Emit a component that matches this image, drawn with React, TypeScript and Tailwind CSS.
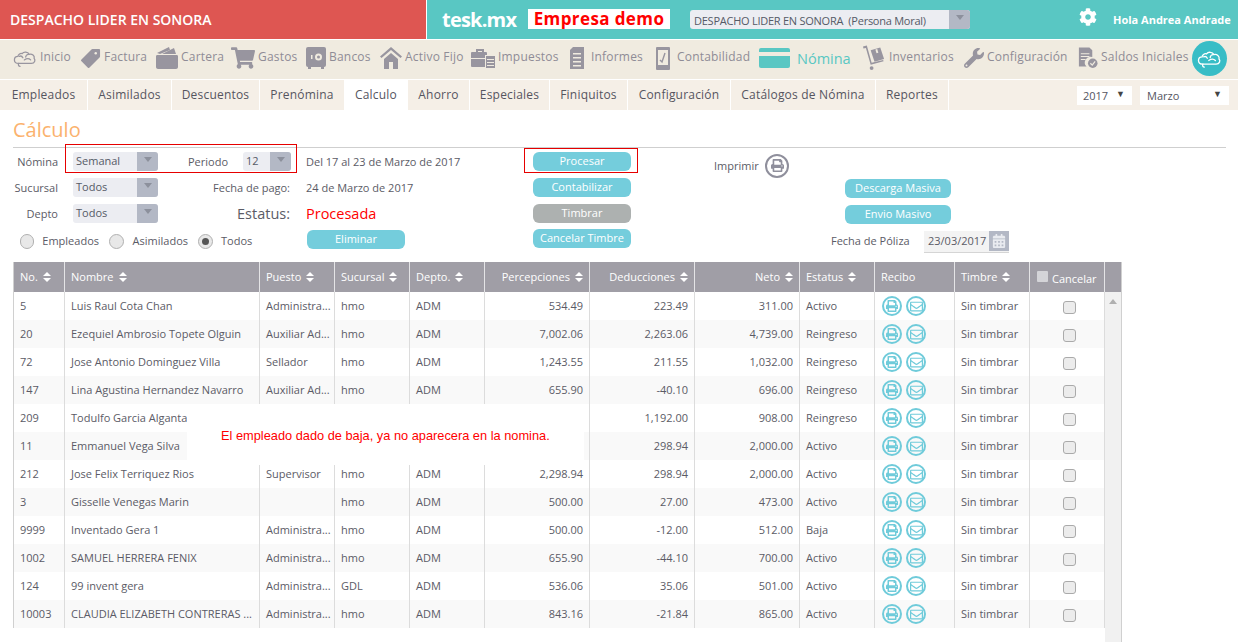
import React from 'react';
import { FaCog, FaPrint, FaShoppingCart, FaWrench, FaRegEnvelope, FaCalendarAlt } from 'react-icons/fa';

const font = "font-['Open_Sans','Noto_Sans',sans-serif]";

function CloudIcon({ className = '' }: { className?: string }) {
  return (
    <svg viewBox="0 0 34 26" className={className} fill="none" stroke="currentColor" strokeWidth="1.8" strokeLinecap="round">
      <path d="M8 20c-4 0-6-2-6-5s2-5 5-5c0-2 3-5 6-4 2-3 8-3 10 1 4-1 8 2 7 6 2 2 1 7-4 7H8z" />
      <path d="M9 10c2-1 4 0 5 2M22 7c-2 0-4 2-4 4M16 15c3-2 7-2 9 0" />
      <path d="M8 20c-1 2 0 4 2 4" />
    </svg>
  );
}

function TagIcon({ className = '' }: { className?: string }) {
  return (
    <svg viewBox="0 0 22 22" className={className} fill="currentColor" stroke="currentColor" strokeWidth="2" strokeLinejoin="round">
      <path d="M13 2h7v7L9 20l-7-7z" />
      <circle cx="16.500" cy="5.500" r="1.300" fill="#f0ebe0" stroke="none" />
    </svg>
  );
}

function WalletIcon({ className = '' }: { className?: string }) {
  return (
    <svg viewBox="0 0 22 22" className={className} fill="currentColor">
      <path d="M1 6 13 0l1 3L4 7z" />
      <path d="M6 7 18 1l2 6z" />
      <path d="M0 9c0-1 1-1 2-1h18c1 0 2 0 2 1v11c0 1-1 2-2 2H2c-1 0-2-1-2-2z" />
    </svg>
  );
}

function SafeIcon({ className = '' }: { className?: string }) {
  return (
    <svg viewBox="0 0 20 22" className={className}>
      <rect x="0" y="0" width="20" height="20" rx="2" fill="currentColor" />
      <rect x="2" y="20" width="3" height="2" fill="currentColor" />
      <rect x="15" y="20" width="3" height="2" fill="currentColor" />
      <circle cx="12.500" cy="10" r="3.500" fill="#f0ebe0" />
      <circle cx="12.500" cy="10" r="1.500" fill="currentColor" />
      <rect x="5" y="8" width="1.500" height="4" fill="#f0ebe0" />
    </svg>
  );
}

function HouseIcon({ className = '' }: { className?: string }) {
  return (
    <svg viewBox="0 0 22 22" className={className} fill="currentColor">
      <path d="M0 9.500 11 0l11 9.500-1.500 1.500L11 3 1.500 11z" />
      <path d="M4 12l7-6 7 6v10h-5v-7H9v7H4z" />
    </svg>
  );
}

function BriefcaseIcon({ className = '' }: { className?: string }) {
  return (
    <svg viewBox="0 0 24 20" className={className} fill="currentColor">
      <path d="M5 4V1h8v3h-2V3H7v1z" />
      <rect x="0" y="4" width="16" height="15" rx="1" />
      <rect x="14" y="7" width="10" height="13" fill="#f0ebe0" />
      <rect x="15" y="8" width="9" height="12" />
      <path d="M16 11h7v1h-7zM16 14h7v1h-7zM16 17h7v1h-7zM0 10h14v1H0z" fill="#f0ebe0" />
    </svg>
  );
}

function DocIcon({ className = '' }: { className?: string }) {
  return (
    <svg viewBox="0 0 14 22" className={className} fill="currentColor">
      <path d="M3 0h11v22H0V3z" />
      <path d="M3 6h8v1.500H3zM3 10h8v1.500H3zM3 14h8v1.500H3zM3 18h8v1.500H3z" fill="#f0ebe0" />
    </svg>
  );
}

function LedgerIcon({ className = '' }: { className?: string }) {
  return (
    <svg viewBox="0 0 14 23" className={className}>
      <rect width="14" height="23" rx="1" fill="currentColor" />
      <rect x="2" y="3" width="10" height="15" fill="#f0ebe0" />
      <path d="M4 13l2 2 3-9" stroke="currentColor" strokeWidth="1.400" fill="none" />
    </svg>
  );
}

function DollyIcon({ className = '' }: { className?: string }) {
  return (
    <svg viewBox="0 0 24 26" className={className} fill="currentColor">
      <path d="M0 1l4-1 5 18 12-3 .5 1.500L8 20 3 2.500 .5 3z" />
      <circle cx="9" cy="23.500" r="2" />
      <path d="M8 5l10-3 4 12-10 3z" />
      <rect x="13.500" y="4" width="2" height="4" fill="#f0ebe0" transform="rotate(-17 14 6)" />
    </svg>
  );
}

function ChecklistIcon({ className = '' }: { className?: string }) {
  return (
    <svg viewBox="0 0 22 22" className={className} fill="currentColor">
      <path d="M2 0h11l3 3v7a6 6 0 0 0-6 10H2z" />
      <path d="M4 6h9v1H4zM4 9h9v1H4zM4 12h5v1H4z" fill="#f0ebe0" />
      <circle cx="16.500" cy="16.500" r="5" />
      <path d="M14 16.500l2 2 3-4" stroke="#f0ebe0" strokeWidth="1.300" fill="none" />
    </svg>
  );
}

function SortIcon() {
  return (
    <svg viewBox="0 0 8 10" className="ml-[5px] inline-block h-[10px] w-[8px] shrink-0" fill="currentColor">
      <path d="M4 0l4 4H0zM0 6h8l-4 4z" />
    </svg>
  );
}

function Select({ value, width }: { value: string; width: string }) {
  return (
    <div className={`flex h-[19px] ${width} items-stretch overflow-hidden rounded-[3px] bg-[#ecedf2]`}>
      <span className="flex-1 truncate pl-[3px] text-[11px] leading-[17px] text-[#555a66]">{value}</span>
      <span className="flex w-[21px] items-start justify-center bg-[#b3b8c5] pt-[5px]">
        <span className="h-0 w-0 border-x-[4px] border-t-[5px] border-x-transparent border-t-[#8c909c]" />
      </span>
    </div>
  );
}

function Btn({ label, gray = false, width = 'w-[98px]' }: { label: string; gray?: boolean; width?: string }) {
  return (
    <button className={`flex h-[19px] ${width} items-center justify-center rounded-[6px] text-[11px] text-white ${gray ? 'bg-[#adb1b0]' : 'bg-[#74cddc]'}`}>
      {label}
    </button>
  );
}

function Radio({ checked = false }: { checked?: boolean }) {
  return (
    <span className="flex h-[15px] w-[15px] items-center justify-center rounded-full border border-[#b0b0b0] bg-[#e8e8e8]">
      {checked && <span className="h-[7px] w-[7px] rounded-full bg-[#555]" />}
    </span>
  );
}

const menuIcon = 'text-[#98959f]';

const menu: { label: string; icon: React.ReactNode; w: string }[] = [
  { label: 'Inicio', icon: <CloudIcon className={`h-[21px] w-[24px] ${menuIcon}`} />, w: 'w-[67px]' },
  { label: 'Factura', icon: <TagIcon className={`h-[21px] w-[21px] ${menuIcon}`} />, w: 'w-[76px]' },
  { label: 'Cartera', icon: <WalletIcon className={`h-[22px] w-[22px] ${menuIcon}`} />, w: 'w-[75px]' },
  { label: 'Gastos', icon: <FaShoppingCart className={`h-[22px] w-[24px] ${menuIcon}`} />, w: 'w-[75px]' },
  { label: 'Bancos', icon: <SafeIcon className={`h-[22px] w-[20px] ${menuIcon}`} />, w: 'w-[74px]' },
  { label: 'Activo Fijo', icon: <HouseIcon className={`h-[22px] w-[22px] ${menuIcon}`} />, w: 'w-[91px]' },
  { label: 'Impuestos', icon: <BriefcaseIcon className={`h-[20px] w-[24px] ${menuIcon}`} />, w: 'w-[98px]' },
  { label: 'Informes', icon: <DocIcon className={`mr-[3px] h-[22px] w-[16px] ${menuIcon}`} />, w: 'w-[86px]' },
  { label: 'Contabilidad', icon: <LedgerIcon className={`mr-[3px] h-[23px] w-[16px] ${menuIcon}`} />, w: 'w-[104px]' },
];

const menuRight: { label: string; icon: React.ReactNode; w: string }[] = [
  { label: 'Inventarios', icon: <DollyIcon className={`h-[26px] w-[23px] ${menuIcon}`} />, w: 'w-[101px]' },
  { label: 'Configuración', icon: <FaWrench className={`h-[20px] w-[20px] ${menuIcon}`} />, w: 'w-[113px]' },
  { label: 'Saldos Iniciales', icon: <ChecklistIcon className={`h-[22px] w-[21px] ${menuIcon}`} />, w: 'w-[112px]' },
];

const tabs = [
  { label: 'Empleados', w: 'w-[88px]' },
  { label: 'Asimilados', w: 'w-[84px]' },
  { label: 'Descuentos', w: 'w-[88px]' },
  { label: 'Prenómina', w: 'w-[85px]' },
  { label: 'Calculo', w: 'w-[63px]', active: true },
  { label: 'Ahorro', w: 'w-[62px]' },
  { label: 'Especiales', w: 'w-[80px]' },
  { label: 'Finiquitos', w: 'w-[78px]' },
  { label: 'Configuración', w: 'w-[103px]' },
  { label: 'Catálogos de Nómina', w: 'w-[145px]' },
  { label: 'Reportes', w: 'w-[73px]' },
];

const cols = ['w-[51px]', 'w-[195px]', 'w-[75px]', 'w-[75px]', 'w-[75px]', 'w-[105px]', 'w-[105px]', 'w-[105px]', 'w-[75px]', 'w-[80px]', 'w-[75px]', 'w-[75px]', 'w-[16px]'];

type Row = [string, string, string, string, string, string, string, string, string];

const rows: Row[] = [
  ['5', 'Luis Raul Cota Chan', 'Administra...', 'hmo', 'ADM', '534.49', '223.49', '311.00', 'Activo'],
  ['20', 'Ezequiel Ambrosio Topete Olguin', 'Auxiliar Ad...', 'hmo', 'ADM', '7,002.06', '2,263.06', '4,739.00', 'Reingreso'],
  ['72', 'Jose Antonio Dominguez Villa', 'Sellador', 'hmo', 'ADM', '1,243.55', '211.55', '1,032.00', 'Reingreso'],
  ['147', 'Lina Agustina Hernandez Navarro', 'Auxiliar Ad...', 'hmo', 'ADM', '655.90', '-40.10', '696.00', 'Reingreso'],
  ['209', 'Todulfo Garcia Alganta', '', '', '', '', '1,192.00', '908.00', 'Reingreso'],
  ['11', 'Emmanuel Vega Silva', '', '', '', '', '298.94', '2,000.00', 'Activo'],
  ['212', 'Jose Felix Terriquez Rios', 'Supervisor', 'hmo', 'ADM', '2,298.94', '298.94', '2,000.00', 'Activo'],
  ['3', 'Gisselle Venegas Marin', '', 'hmo', 'ADM', '500.00', '27.00', '473.00', 'Activo'],
  ['9999', 'Inventado Gera 1', 'Administra...', 'hmo', 'ADM', '500.00', '-12.00', '512.00', 'Baja'],
  ['1002', 'SAMUEL HERRERA FENIX', 'Administra...', 'hmo', 'ADM', '655.90', '-44.10', '700.00', 'Activo'],
  ['124', '99 invent gera', 'Administra...', 'GDL', 'ADM', '536.06', '35.06', '501.00', 'Activo'],
  ['10003', 'CLAUDIA ELIZABETH CONTRERAS ...', 'Administra...', 'hmo', 'ADM', '843.16', '-21.84', '865.00', 'Activo'],
];

const cell = 'flex h-full shrink-0 items-center border-r border-[#dcdcdc] px-[6px] whitespace-nowrap overflow-hidden';

function HeadCell({ label, w, right = false, sort = true }: { label: string; w: string; right?: boolean; sort?: boolean }) {
  return (
    <div className={`flex h-full ${w} shrink-0 items-center border-r border-[#e4e4e6] px-[6px] ${right ? 'justify-end' : ''}`}>
      <span>{label}</span>
      {sort && <SortIcon />}
    </div>
  );
}

function ReciboIcons() {
  return (
    <div className="flex items-center gap-[4px] pl-px text-[#6fcbda]">
      <span className="flex h-[20px] w-[20px] shrink-0 items-center justify-center rounded-full border-2 border-[#6fcbda]">
        <FaPrint className="h-[12px] w-[12px]" />
      </span>
      <span className="flex h-[20px] w-[20px] shrink-0 items-center justify-center rounded-full border-2 border-[#6fcbda]">
        <FaRegEnvelope className="h-[13px] w-[13px]" />
      </span>
    </div>
  );
}

export default function App() {
  return (
    <div className={`${font} h-[642px] w-[1238px] overflow-hidden bg-white text-[#5b5b66]`}>
      {/* top bar */}
      <div className="flex h-[40px] border-b border-white">
        <div className="flex w-[426px] items-center bg-[#de5652] pl-[10px] text-[14px] text-white [font-weight:600]">
          DESPACHO LIDER EN SONORA
        </div>
        <div className="ml-px flex flex-1 items-center bg-[#59c7c3]">
          <span className="ml-[15px] w-[71px] text-[20px] font-bold leading-none tracking-[-0.8px] whitespace-nowrap text-white">tesk.mx</span>
          <span className="ml-[15px] w-[142px] -translate-y-px bg-white text-center text-[17px] font-bold leading-[20px] tracking-[0.4px] text-[#ff0000]">Empresa demo</span>
          <div className="ml-[20px] flex h-[19px] w-[280px] overflow-hidden rounded-[3px] bg-[#ecedf2]">
            <span className="flex-1 pl-[4px] text-[11px] leading-[21px] tracking-[-0.25px] whitespace-pre text-[#555a66]">DESPACHO LIDER EN SONORA  (Persona Moral)</span>
            <span className="flex w-[21px] items-start justify-center bg-[#b3b8c5] pt-[5px]">
              <span className="h-0 w-0 border-x-[4px] border-t-[5px] border-x-transparent border-t-[#8c909c]" />
            </span>
          </div>
          <FaCog className="ml-[109px] h-[18px] w-[18px] -translate-y-[3px] text-white" />
          <span className="ml-[16px] translate-y-px text-[11px] font-bold whitespace-nowrap text-white">Hola Andrea Andrade</span>
        </div>
      </div>

      {/* main menu */}
      <div className="relative flex h-[40px] items-center border-b border-white bg-[#f0ebe0] pb-[3px] pl-[13px] text-[12px] tracking-[0.2px] text-[#8f8c96]">
        {menu.map((m) => (
          <div key={m.label} className={`flex shrink-0 items-center ${m.w}`}>
            {m.icon}
            <span className="ml-[3px] -translate-y-px whitespace-nowrap">{m.label}</span>
          </div>
        ))}
        <div className="flex w-[104px] shrink-0 items-center">
          <span className="h-[20px] w-[31px] rounded-[2px] bg-[#59c7c3] pt-[4px]">
            <span className="block h-[4px] bg-[#f0ebe0]" />
          </span>
          <span className="ml-[7px] translate-y-px text-[14.500px] tracking-normal text-[#59c7c3]">Nómina</span>
        </div>
        {menuRight.map((m) => (
          <div key={m.label} className={`flex shrink-0 items-center ${m.w}`}>
            {m.icon}
            <span className="ml-[3px] -translate-y-px whitespace-nowrap">{m.label}</span>
          </div>
        ))}
        <div className="absolute left-[1192px] top-[1px] flex h-[35px] w-[35px] items-center justify-center rounded-full bg-[#38bdc6] text-white">
          <CloudIcon className="h-[20px] w-[25px]" />
        </div>
      </div>

      {/* tabs */}
      <div className="flex h-[30px] items-stretch bg-[#f5efe7] text-[12px] tracking-[0.2px] text-[#55555f]">
        {tabs.map((t) => (
          <div key={t.label} className={`flex ${t.w} shrink-0 items-center justify-center border-r border-white ${t.active ? 'bg-white' : ''}`}>
            {t.label}
          </div>
        ))}
        <div className="ml-auto flex items-center gap-[8px] pr-[9px] text-[11px] tracking-normal">
          <div className="flex h-[19px] w-[55px] items-center justify-between bg-white pl-[6px] pr-[7px] pt-[2px]">
            <span>2017</span>
            <span className="mb-[5px] text-[9px] text-[#444]">▼</span>
          </div>
          <div className="flex h-[19px] w-[89px] items-center justify-between bg-white pl-[7px] pr-[7px] pt-[2px]">
            <span>Marzo</span>
            <span className="mb-[5px] text-[9px] text-[#444]">▼</span>
          </div>
        </div>
      </div>

      {/* title */}
      <div className="ml-[13px] mt-[8px] h-[30px] w-[1213px] border-b border-[#cfcfcf] text-[20px] leading-[24px] text-[#fbb26e]">Cálculo</div>

      {/* form */}
      <div className="relative flex h-[114px] flex-col gap-[7px] pt-[4px] text-[11px]">
        <div className="absolute left-[65px] top-[-4px] h-[29px] w-[232px] border border-[#e60000]" />
        <div className="absolute left-[524px] top-0 h-[25px] w-[114px] border border-[#e60000]" />

        <div className="flex h-[19px] items-center">
          <span className="w-[58px] translate-y-px text-right">Nómina</span>
          <span className="ml-[15px]"><Select value="Semanal" width="w-[85px]" /></span>
          <span className="ml-[30px] w-[40px] translate-y-px">Periodo</span>
          <span className="ml-[15px]"><Select value="12" width="w-[48px]" /></span>
          <span className="ml-[15px] w-[227px] translate-y-px">Del 17 al 23 de Marzo de 2017</span>
          <Btn label="Procesar" />
          <span className="ml-[83px] w-[44px] translate-y-[5px]">Imprimir</span>
          <span className="ml-[7px] flex h-[24px] w-[24px] translate-y-[4px] items-center justify-center rounded-full border-2 border-[#8f8f9c] text-[#8f8f9c]">
            <FaPrint className="h-[13px] w-[13px]" />
          </span>
        </div>
        <div className="flex h-[19px] items-center">
          <span className="w-[58px] translate-y-px text-right">Sucursal</span>
          <span className="ml-[15px]"><Select value="Todos" width="w-[85px]" /></span>
          <span className="w-[132px] translate-y-px text-right">Fecha de pago:</span>
          <span className="ml-[16px] w-[227px] translate-y-px">24 de Marzo de 2017</span>
          <Btn label="Contabilizar" />
          <span className="ml-[214px] translate-y-px"><Btn label="Descarga Masiva" width="w-[106px]" /></span>
        </div>
        <div className="flex h-[19px] items-center">
          <span className="w-[58px] translate-y-px text-right">Depto</span>
          <span className="ml-[15px]"><Select value="Todos" width="w-[85px]" /></span>
          <span className="w-[132px] text-right text-[14.500px]">Estatus:</span>
          <span className="ml-[16px] w-[227px] text-[14.500px] text-[#ff0000]">Procesada</span>
          <Btn label="Timbrar" gray />
          <span className="ml-[214px] translate-y-px"><Btn label="Envio Masivo" width="w-[106px]" /></span>
        </div>
        <div className="flex h-[19px] items-center">
          <span className="ml-[20px] flex w-[79px] translate-y-[2px] items-center gap-[8px]"><Radio />Empleados</span>
          <span className="ml-[10px] flex w-[79px] translate-y-[2px] items-center gap-[9px]"><Radio />Asimilados</span>
          <span className="ml-[10px] flex w-[55px] translate-y-[2px] items-center gap-[8px]"><Radio checked />Todos</span>
          <span className="ml-[54px]"><Btn label="Eliminar" /></span>
          <span className="ml-[128px] -translate-y-px"><Btn label="Cancelar Timbre" /></span>
          <span className="ml-[200px] w-[78px] translate-y-[2px] whitespace-nowrap">Fecha de Póliza</span>
          <div className="ml-[15px] flex h-[22px] w-[85px] translate-y-[2px] items-start border-b border-[#d5d5d5] bg-[#f3f3f3] pl-[4px]">
            <span className="flex-1 leading-[20px]">23/03/2017</span>
            <span className="flex h-[20px] w-[20px] items-center justify-center bg-[#b3b8c5] text-[#e9ebf0]">
              <FaCalendarAlt className="h-[14px] w-[14px]" />
            </span>
          </div>
        </div>
      </div>

      {/* table */}
      <div className="relative ml-[13px] w-[1109px] text-[11px]">
        <div className="flex h-[30px] items-center border-x border-[#d0d0d0] bg-[#a09ea6] text-white">
          <HeadCell label="No." w={cols[0]} />
          <HeadCell label="Nombre" w={cols[1]} />
          <HeadCell label="Puesto" w={cols[2]} />
          <HeadCell label="Sucursal" w={cols[3]} />
          <HeadCell label="Depto." w={cols[4]} />
          <HeadCell label="Percepciones" w={cols[5]} right />
          <HeadCell label="Deducciones" w={cols[6]} right />
          <HeadCell label="Neto" w={cols[7]} right />
          <HeadCell label="Estatus" w={cols[8]} />
          <HeadCell label="Recibo" w={cols[9]} sort={false} />
          <HeadCell label="Timbre" w={cols[10]} />
          <div className={`flex h-full ${cols[11]} shrink-0 items-center gap-[4px] border-r border-[#e4e4e6] pl-[7px] pt-[5px]`}>
            <span className="h-[11px] w-[11px] -translate-y-[3px] rounded-[1px] bg-[#d4d4d8]" />
            Cancelar
          </div>
          <div className={cols[12]} />
        </div>
        <div className="relative border-l border-[#d0d0d0]">
          {rows.map((r, i) => (
            <div key={r[0]} className={`flex h-[28px] items-center border-r border-[#d0d0d0] ${i % 2 ? 'bg-[#f9f9f9]' : 'bg-white'}`}>
              <div className={`${cell} ${cols[0]}`}>{r[0]}</div>
              <div className={`${cell} ${cols[1]}`}>{r[1]}</div>
              <div className={`${cell} ${cols[2]}`}>{r[2]}</div>
              <div className={`${cell} ${cols[3]}`}>{r[3]}</div>
              <div className={`${cell} ${cols[4]}`}>{r[4]}</div>
              <div className={`${cell} ${cols[5]} justify-end`}>{r[5]}</div>
              <div className={`${cell} ${cols[6]} justify-end`}>{r[6]}</div>
              <div className={`${cell} ${cols[7]} justify-end`}>{r[7]}</div>
              <div className={`${cell} ${cols[8]}`}>{r[8]}</div>
              <div className={`${cell} ${cols[9]}`}><ReciboIcons /></div>
              <div className={`${cell} ${cols[10]}`}>Sin timbrar</div>
              <div className={`${cell} ${cols[11]} justify-center pl-[10px]`}>
                <span className="mt-[2px] h-[13px] w-[13px] rounded-[3px] border border-[#aaaaaa] bg-[#ececec]" />
              </div>
              <div className={`h-full ${cols[12]} bg-[#f1f1f1]`} />
            </div>
          ))}
          <span className="absolute right-[5px] top-[7px] h-0 w-0 border-x-[4px] border-b-[5px] border-x-transparent border-b-[#b0b0b0]" />
          {/* baja notice */}
          <div className="absolute left-[173px] top-[112px] flex h-[61px] w-[397px] items-center bg-white pl-[34px] pt-[2px] font-['Liberation_Sans',sans-serif] text-[12.800px] whitespace-nowrap text-[#ff0000]">
            El empleado dado de baja, ya no aparecera en la nomina.
          </div>
        </div>
        <div className="flex h-[14px] justify-end">
          <div className="w-[17px] border-r border-[#d0d0d0] bg-[#f1f1f1]" />
        </div>
      </div>
    </div>
  );
}
